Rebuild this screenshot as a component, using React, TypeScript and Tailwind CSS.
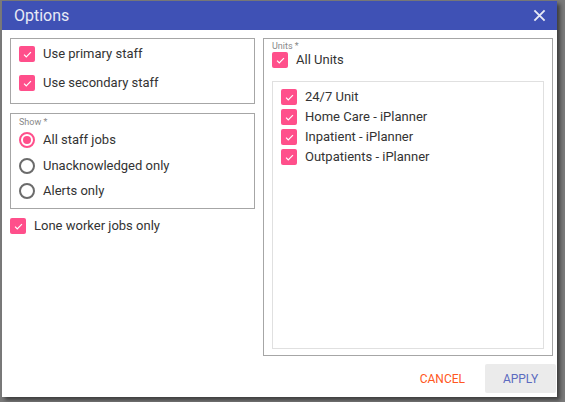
import React, { useState } from 'react';

const PINK = 'bg-[#ff4f8b]';

function Check({ checked, onChange, size = 16 }: { checked: boolean; onChange: () => void; size?: number }) {
  return (
    <button
      onClick={onChange}
      style={{ width: size, height: size }}
      className={`flex shrink-0 items-center justify-center rounded-[2px] ${checked ? PINK : 'border-2 border-[#757575] bg-white'}`}
    >
      {checked && (
        <svg viewBox="0 0 16 16" className="h-[11px] w-[11px]" fill="none" stroke="white" strokeWidth="1.8">
          <path d="M3 8.2l3.2 3.2L13 4.6" />
        </svg>
      )}
    </button>
  );
}

function Radio({ checked, onChange }: { checked: boolean; onChange: () => void }) {
  return (
    <button
      onClick={onChange}
      className={`flex h-4 w-4 shrink-0 items-center justify-center rounded-full border-2 ${checked ? 'border-[#ff4f8b]' : 'border-[#6b6b6b]'}`}
    >
      {checked && <span className="h-2 w-2 rounded-full bg-[#ff4f8b]" />}
    </button>
  );
}

const units = ['24/7 Unit', 'Home Care - iPlanner', 'Inpatient - iPlanner', 'Outpatients - iPlanner'];

export default function App() {
  const [primary, setPrimary] = useState(true);
  const [secondary, setSecondary] = useState(true);
  const [show, setShow] = useState('all');
  const [lone, setLone] = useState(true);
  const [selected, setSelected] = useState<string[]>(units);

  const allUnits = selected.length === units.length;
  const toggleUnit = (u: string) =>
    setSelected(prev => (prev.includes(u) ? prev.filter(x => x !== u) : [...prev, u]));

  return (
    <div className="h-[402px] w-[565px] overflow-hidden bg-[#7a7a7a] pl-[2px] pt-[1px] font-['Roboto',sans-serif] text-[13px] text-[#333]">
      <div className="flex h-[396px] w-[555px] flex-col bg-white shadow-[3px_3px_4px_rgba(0,0,0,0.5)]">
        {/* Header */}
        <div className="flex h-[29px] items-center justify-between bg-[#3f51b5] pl-3 pr-[11px]">
          <span className="text-[16px] text-[#e8eaf6]">Options</span>
          <svg viewBox="0 0 14 14" className="h-[13px] w-[13px]" stroke="#e8eaf6" strokeWidth="2">
            <path d="M1.5 1.5l11 11M12.5 1.5l-11 11" />
          </svg>
        </div>

        {/* Body */}
        <div className="flex flex-1 gap-2 pl-2 pr-[4px] pt-2">
          {/* Left column */}
          <div className="flex w-[245px] flex-col">
            <div className="flex h-[66px] flex-col border border-[#a6a6a6] pl-2 pt-[7px]">
              <label className="flex h-[29px] items-start gap-2">
                <Check checked={primary} onChange={() => setPrimary(!primary)} />
                <span className="leading-4">Use primary staff</span>
              </label>
              <label className="flex items-start gap-2">
                <Check checked={secondary} onChange={() => setSecondary(!secondary)} />
                <span className="leading-4">Use secondary staff</span>
              </label>
            </div>

            <div className="mt-[9px] flex h-[96px] flex-col border border-[#a6a6a6] pl-2 pt-[2px]">
              <span className="text-[9px] leading-[12px] text-[#888]">Show *</span>
              <div className="mt-[4px] flex flex-col gap-[9.5px]">
                {[
                  ['all', 'All staff jobs'],
                  ['unack', 'Unacknowledged only'],
                  ['alerts', 'Alerts only'],
                ].map(([k, l]) => (
                  <label key={k} className="flex items-center gap-2">
                    <Radio checked={show === k} onChange={() => setShow(k)} />
                    <span className="leading-4">{l}</span>
                  </label>
                ))}
              </div>
            </div>

            <label className="mt-[9px] flex items-center gap-2">
              <Check checked={lone} onChange={() => setLone(!lone)} />
              <span className="leading-4">Lone worker jobs only</span>
            </label>
          </div>

          {/* Right column */}
          <div className="flex h-[318px] w-[290px] flex-col border border-[#a6a6a6] pb-[6px] pl-2 pr-2 pt-[1px]">
            <span className="text-[9px] leading-[12px] text-[#888]">Units *</span>
            <label className="flex items-center gap-2">
              <Check checked={allUnits} onChange={() => setSelected(allUnits ? [] : units)} />
              <span className="leading-4">All Units</span>
            </label>
            <div className="mt-[13px] flex flex-1 flex-col gap-1 border border-[#e0e0e0] pl-2 pt-[7px]">
              {units.map(u => (
                <label key={u} className="flex items-center gap-2">
                  <Check checked={selected.includes(u)} onChange={() => toggleUnit(u)} />
                  <span className="leading-4">{u}</span>
                </label>
              ))}
            </div>
          </div>
        </div>

        {/* Footer */}
        <div className="flex items-center justify-end gap-5 pb-[4px] pr-[1px] pt-[7px]">
          <button className="text-[12px] text-[#ff5722]">CANCEL</button>
          <button className="h-[29px] w-[71px] rounded-[2px] bg-[#ebebeb] text-[12px] text-[#5c6bc0]">APPLY</button>
        </div>
      </div>
    </div>
  );
}
